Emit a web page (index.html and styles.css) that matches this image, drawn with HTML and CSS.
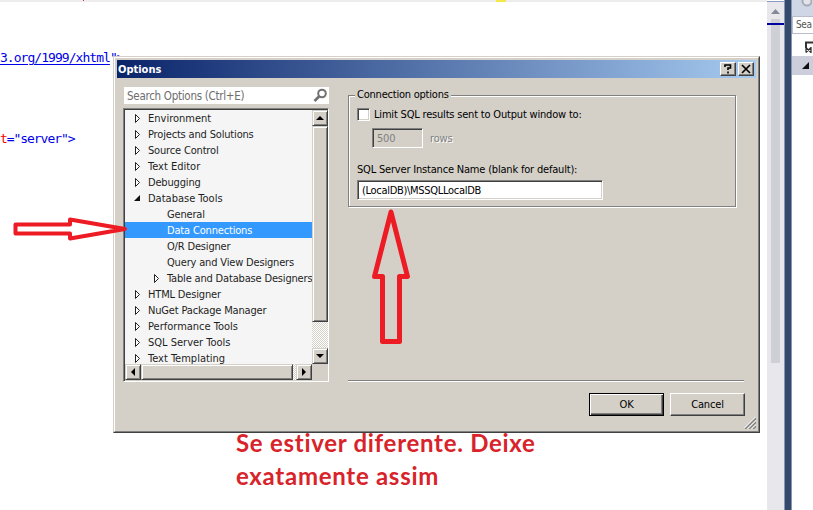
FILE: index.html
```html
<!DOCTYPE html>
<html lang="en">
<head>
<meta charset="utf-8">
<title>Options</title>
<link rel="stylesheet" href="styles.css">
</head>
<body>
<div class="workspace">
  <main class="editor">
    <div class="editor-top"><i></i><i class="hl"></i></div>
    <pre class="code line-a"><u>3.org/1999/xhtml</u>"&gt;</pre>
    <pre class="code line-b"><b>t</b>="server"&gt;</pre>
    <p class="note">Se estiver diferente. Deixe<br>exatamente assim</p>
  </main>
  <div class="gutter-scroll">
    <div class="split"></div>
    <svg class="up" width="17" height="10"><path d="M4 9 8.500 4 13 9z" fill="#868999"/></svg>
    <div class="thumb"></div>
    <div class="caret-mark"></div>
  </div>
  <div class="divider"></div>
  <aside class="panel">
    <div class="panel-tools"><svg width="20" height="14"><circle cx="15" cy="1" r="4.500" fill="#e3e4ea" stroke="#a9abb8" stroke-width="2"/></svg></div>
    <div class="panel-search">Sea</div>
    <div class="panel-body">
      <svg width="21" height="18"><path d="M14 10V4.500h8" fill="none" stroke="#333" stroke-width="2"/><path d="M14 9.500l5 5M14 14.500l5-5M14 9.500v5M19 9v6" stroke="#333" stroke-width="1.300"/></svg>
      <div class="panel-row"><svg width="21" height="19"><path d="M17 6v7h-7z" fill="#111"/></svg></div>
    </div>
  </aside>
</div>

<section class="dialog">
  <div class="frame">
    <header class="titlebar"><h1>Options</h1>
      <button class="sys"><svg width="12" height="12"><path d="M3 4V2h5.500v3H6v2M6 8.500v2" fill="none" stroke="#000" stroke-width="1.600"/></svg></button>
      <button class="sys"><svg width="12" height="10"><path d="M2 1l8 8M10 1l-8 8" stroke="#000" stroke-width="1.700"/></svg></button>
    </header>
    <div class="content">
      <div class="left">
        <div class="search"><span>Search Options (Ctrl+E)</span><svg width="15" height="17"><circle cx="9" cy="6.500" r="3.800" fill="none" stroke="#717171" stroke-width="2"/><path d="M6.500 9 1.500 14" stroke="#717171" stroke-width="2.600"/></svg></div>
        <div class="tree">
          <ul class="items">
            <li class="wide"><svg class="tw"><use href="#closed"/></svg><span>Environment</span></li>
            <li><svg class="tw"><use href="#closed"/></svg><span>Projects and Solutions</span></li>
            <li><svg class="tw"><use href="#closed"/></svg><span>Source Control</span></li>
            <li class="wide"><svg class="tw"><use href="#closed"/></svg><span>Text Editor</span></li>
            <li><svg class="tw"><use href="#closed"/></svg><span>Debugging</span></li>
            <li class="wide"><svg class="tw"><use href="#open"/></svg><span>Database Tools</span></li>
            <li class="sub"><svg class="tw"></svg><span>General</span></li>
            <li class="sub selected"><svg class="tw"></svg><span>Data Connections</span></li>
            <li class="sub"><svg class="tw"></svg><span>O/R Designer</span></li>
            <li class="sub"><svg class="tw"></svg><span>Query and View Designers</span></li>
            <li class="sub"><svg class="tw"><use href="#closed"/></svg><span>Table and Database Designers</span></li>
            <li><svg class="tw"><use href="#closed"/></svg><span>HTML Designer</span></li>
            <li><svg class="tw"><use href="#closed"/></svg><span>NuGet Package Manager</span></li>
            <li class="wide"><svg class="tw"><use href="#closed"/></svg><span>Performance Tools</span></li>
            <li class="wide"><svg class="tw"><use href="#closed"/></svg><span>SQL Server Tools</span></li>
            <li class="wide"><svg class="tw"><use href="#closed"/></svg><span>Text Templating</span></li>
          </ul>
          <div class="vbar">
            <div class="sb"><svg width="12" height="12"><path d="M2 8 6 4l4 4z"/></svg></div>
            <div class="sb vthumb"></div><div class="rest"></div>
            <div class="sb"><svg width="12" height="12"><path d="M2 4h8L6 8z"/></svg></div>
          </div>
          <div class="hbar">
            <div class="sb"><svg width="12" height="12"><path d="M8 2v8L4 6z"/></svg></div>
            <div class="sb hthumb"></div><div class="rest"></div>
            <div class="sb"><svg width="12" height="12"><path d="M4 2l4 4-4 4z"/></svg></div>
          </div>
        </div>
      </div>
      <div class="right">
        <fieldset class="group">
          <legend>Connection options</legend>
          <label class="check"><i class="box"></i><span>Limit SQL results sent to Output window to:</span></label>
          <div class="rows"><div class="field disabled">500</div><span>rows</span></div>
          <div class="name-label"><span>SQL Server Instance Name (blank for default):</span></div>
          <div class="field name"><span>(LocalDB)\MSSQLLocalDB</span></div>
        </fieldset>
        <hr>
      </div>
    </div>
    <footer class="actions">
      <button class="btn default"><span>OK</span></button>
      <button class="btn"><span>Cancel</span></button>
    </footer>
    <svg class="grip" width="12" height="12"><path d="M1 12 12 1M5 12l7-7M9 12l3-3" stroke="#808080" stroke-width="1.600"/><path d="M0 11.500 11.500 0M3.500 12 12 3.500M7.500 12 12 7.500" stroke="#fff"/></svg>
  </div>
</section>

<svg class="marks" width="813" height="510">
  <defs>
    <symbol id="closed" viewBox="0 0 10 16" overflow="visible"><path d="M2.500 4.500v8l4-4z" fill="#fff" stroke="#222"/></symbol>
    <symbol id="open" viewBox="0 0 10 16" overflow="visible"><path d="M7 5v6H1z" fill="#111"/></symbol>
  </defs>
  <g fill="none" stroke="#ed1c24" stroke-width="4" stroke-linejoin="round">
    <path d="M15.500 224.500H70V219.500L125 229 70 238.500V233.500H15.500z"/>
    <path stroke-width="5" d="M391 212 407.500 276.500H399.500V341.500H382.500V276.500H374.500z"/>
  </g>
</svg>
</body>
</html>
```
FILE: styles.css
```css
* { box-sizing: border-box; }
body { margin: 0; width: 813px; height: 510px; overflow: hidden; position: relative; background: #fff; font: 11px/16px "DejaVu Sans Condensed", "DejaVu Sans", sans-serif; font-stretch: condensed; color: #000; }
svg { display: block; }
span { white-space: nowrap; }

.workspace { display: flex; height: 510px; }
.editor { width: 767px; display: flex; flex-direction: column; overflow: hidden; }
.editor-top { display: flex; height: 2px; background: #ededed; padding-left: 83px; }
.editor-top i { display: block; width: 1px; height: 1px; background: #d33; }
.editor-top .hl { width: 10px; height: 2px; margin-left: 412px; background: #f5e84a; }
.code { margin: 0; font: 13px/16px "DejaVu Sans Mono", monospace; letter-spacing: -0.960px; color: #0000e8; }
.code b { color: #f00; font-weight: normal; }
.code u { text-underline-offset: 2px; }
.line-a { margin-top: 48px; }
.line-b { margin-top: 65px; letter-spacing: -1.060px; }
.note { margin: 279px 0 0 236px; font: bold 24px/33px Lato, sans-serif; letter-spacing: 0.720px; color: #d8232a; }
.gutter-scroll { width: 17px; background: #e8e8ec; display: flex; flex-direction: column; position: relative; }
.split { height: 2px; border-bottom: 1px solid #8a9cc0; background: #fff; }
.up { margin-top: 3px; }
.thumb { width: 9px; height: 344px; margin: 4px 0 0 4px; background: #cfd0d6; }
.caret-mark { position: absolute; left: 0; top: 23px; width: 17px; height: 2px; background: #0000a0; }
.divider { width: 8px; background: #35496a; border: solid #8596b6; border-width: 0 1px; }
.panel { width: 21px; overflow: hidden; }
.panel-tools { height: 16px; background: #cfd6e5; }
.panel-search { height: 18px; border: solid #b9bccb; border-width: 1px 0 1px 1px; padding-left: 3px; font-size: 10px; letter-spacing: -0.400px; color: #555; }
.panel-body { padding-top: 4px; }
.panel-row { height: 19px; background: #cccedb; }

.dialog { position: absolute; left: 113px; top: 56px; width: 647px; height: 377px; background: #d4d0c8; border: 1px solid; border-color: #d4d0c8 #404040 #404040 #d4d0c8; }
.frame { height: 375px; border: 1px solid; border-color: #fff #808080 #808080 #fff; padding: 2px; position: relative; }
.titlebar { height: 18px; display: flex; align-items: center; background: linear-gradient(90deg, #0a246a, #a6caf0); padding: 0 2px 0 1px; gap: 2px; }
h1 { margin: 0; flex: 1; font: bold 11px/18px "DejaVu Sans Condensed", sans-serif; font-stretch: condensed; padding-top: 1px; color: #fff; }
button { font: inherit; color: #000; padding: 0; }
.sys { width: 16px; height: 14px; background: #d4d0c8; border: 1px solid; border-color: #fff #404040 #404040 #fff; box-shadow: inset -1px -1px #808080; display: flex; align-items: center; justify-content: center; }
.content { display: flex; padding: 9px 0 0 6px; height: 304px; }
.left { width: 206px; margin-right: 19px; }
.search { display: flex; justify-content: space-between; height: 17px; margin-left: 1px; background: #fff; padding: 0 1px 0 3px; color: #6d6d6d; }
.search span { font-size: 11.500px; line-height: 18px; letter-spacing: -0.280px; }
.tree { height: 274px; margin-top: 4px; border: 1px solid; border-color: #808080 #fff #fff #808080; box-shadow: inset 1px 1px #404040; padding: 1px; display: grid; grid-template: 254px 16px / 187px 16px; background: #d4d0c8; }
.items { margin: 0; padding: 0; list-style: none; background: #f5f5f5; overflow: hidden; letter-spacing: -0.170px; }
.items li { height: 16px; line-height: 18px; display: flex; padding-left: 8px; color: #1e1e1e; }
.items .sub { padding-left: 27px; }
.items .wide { letter-spacing: 0; }
.tw { width: 10px; height: 16px; margin-right: 5px; flex: none; }
.items .selected { background: #39f; color: #fff; }
.vbar, .hbar { display: flex; }
.vbar { flex-direction: column; }
.sb { width: 16px; height: 16px; flex: none; background: #d4d0c8; border: 1px solid; border-color: #d4d0c8 #404040 #404040 #d4d0c8; box-shadow: inset 1px 1px #fff, inset -1px -1px #808080; padding: 1px; }
.vthumb { height: 196px; }
.hthumb { width: 152px; }
.rest { flex: 1; background: repeating-conic-gradient(#fff 0 25%, #d4d0c8 0 50%) 0 0 / 2px 2px; }
.right { width: 396px; }
.group { margin: 0; padding: 3px 0 0 8px; width: 388px; height: 120px; border: 1px solid #808080; border-image: linear-gradient(#808080, #808080) 1; box-shadow: 1px 1px #fff, inset 1px 1px #fff; letter-spacing: -0.190px; }
legend { padding: 0 2px; margin-left: -2px; letter-spacing: -0.220px; background: #d4d0c8; }
.check { display: flex; height: 16px; align-items: center; }
.box { width: 13px; height: 13px; background: #fff; border: 1px solid; border-color: #808080 #fff #fff #808080; box-shadow: inset 1px 1px #404040, inset -1px -1px #d4d0c8; margin-right: 4px; }
.check span { line-height: 18px; padding-top: 2px; }
.rows { display: flex; gap: 7px; align-items: center; margin: 6px 0 0 15px; color: #808080; text-shadow: 1px 1px #fff; }
.rows span { padding-top: 1px; }
.field { height: 20px; border: 1px solid; border-color: #808080 #fff #fff #808080; box-shadow: inset 1px 1px #404040, inset -1px -1px #d4d0c8; padding-left: 4px; line-height: 19px; }
.disabled { width: 51px; text-shadow: none; }
.name-label { margin-top: 14px; }
.name { width: 246px; margin-top: 2px; background: #fff; letter-spacing: -0.300px; }
hr { margin: 173px 0 0; border: 0; height: 2px; background: linear-gradient(#808080 50%, #fff 50%); }
.actions { display: flex; justify-content: flex-end; gap: 6px; padding: 11px 11px 0 0; }
.btn { width: 75px; height: 23px; letter-spacing: -0.150px; background: #d4d0c8; border: 1px solid; border-color: #fff #404040 #404040 #fff; box-shadow: inset -1px -1px #808080; }
.default { border-color: #000; box-shadow: inset 1px 1px #fff, inset -1px -1px #404040, inset -2px -2px #808080; }
.grip { position: absolute; right: 2px; bottom: 2px; }
.marks { position: absolute; left: 0; top: 0; pointer-events: none; }
```
